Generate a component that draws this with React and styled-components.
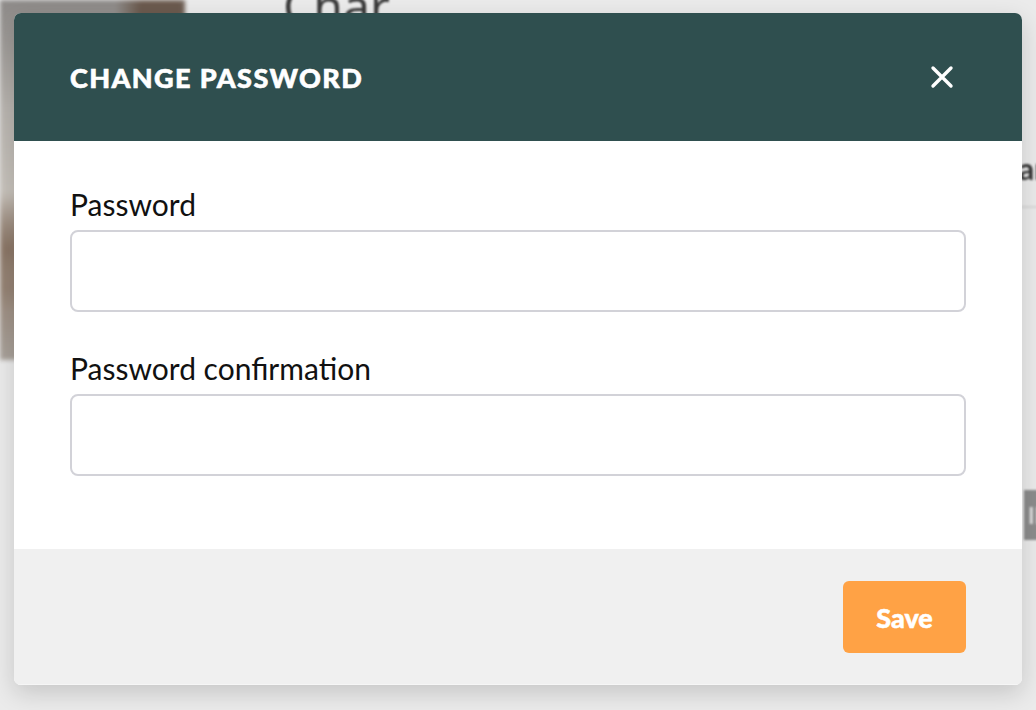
import React from 'react';
import styled, { createGlobalStyle } from 'styled-components';

const GlobalStyle = createGlobalStyle`
  html, body {
    margin: 0;
    padding: 0;
    background: #ebebeb;
    font-family: Lato, "Noto Sans", "Liberation Sans", sans-serif;
  }
  * {
    box-sizing: border-box;
  }
`;

const Page = styled.div`
  position: relative;
  width: 1036px;
  height: 710px;
  overflow: hidden;
  display: flex;
  background: #ebebeb;
`;

const Photo = styled.div`
  flex-shrink: 0;
  width: 185px;
  height: 360px;
  background:
    radial-gradient(circle at 160px 10px, #6b5a4e 0, #6b5a4e 20px, transparent 45px),
    radial-gradient(circle at 8px 250px, #8a7565 0, transparent 60px),
    linear-gradient(180deg, #8d8a88 0%, #b9b5b0 30%, #c9c4bd 55%, #9b8a7c 80%, #a9a29b 100%);
  filter: blur(2px);
`;

const Center = styled.div`
  flex-shrink: 0;
  width: 839px;
  padding-left: 98px;
`;

const PageHeading = styled.h1`
  margin: -27px 0 0;
  font-family: "Noto Sans", Lato, sans-serif;
  font-weight: 400;
  font-size: 48px;
  color: #3a3a3a;
  filter: blur(1px);
`;

const Side = styled.div`
  flex-shrink: 0;
  width: 220px;
  padding-top: 150px;
  display: flex;
  flex-direction: column;
  filter: blur(1px);
`;

const SideTitle = styled.div`
  font-size: 30px;
  font-weight: 700;
  color: #333;
  margin-left: -20px;
  padding-bottom: 20px;
  border-bottom: 2px solid #d8d8d8;
`;

const SideBand = styled.div`
  margin-top: 282px;
  height: 50px;
  background: #8c8c8c;
  color: #e0e0e0;
  font-size: 22px;
  font-weight: 700;
  padding: 12px 0 0 4px;
`;

const Overlay = styled.div`
  position: absolute;
  inset: 0;
  padding: 13px 14px;
`;

const Modal = styled.div`
  width: 1008px;
  border-radius: 7px;
  overflow: hidden;
  background: #fff;
  box-shadow: 0 8px 24px rgba(0, 0, 0, 0.16);
`;

const Header = styled.div`
  height: 128px;
  padding: 0 56px;
  display: flex;
  align-items: center;
  justify-content: space-between;
  background: #2f4f4f;
`;

const Title = styled.h2`
  margin: 0;
  color: #fff;
  font-size: 27px;
  font-weight: 900;
  letter-spacing: 1.4px;
  text-transform: uppercase;
  -webkit-text-stroke: 0.6px #fff;
`;

const CloseButton = styled.button`
  width: 48px;
  height: 48px;
  padding: 0;
  border: none;
  background: transparent;
  display: flex;
  align-items: center;
  justify-content: center;
  cursor: pointer;
`;

const Body = styled.div`
  padding: 45px 56px 35px;
  display: flex;
  flex-direction: column;
`;

const Field = styled.div`
  display: flex;
  flex-direction: column;
  margin-bottom: 38px;
`;

const Label = styled.label`
  font-size: 30px;
  line-height: 36px;
  color: #111;
  margin-bottom: 8px;
`;

const Input = styled.input`
  height: 82px;
  width: 100%;
  border: 2px solid #d2d2d8;
  border-radius: 8px;
  padding: 0 20px;
  font-size: 26px;
  font-family: inherit;
  outline: none;
`;

const Footer = styled.div`
  padding: 32px 56px 31px;
  display: flex;
  justify-content: flex-end;
  background: #f0f0f0;
  border-bottom: 1px solid #f6f6f6;
`;

const SaveButton = styled.button`
  width: 123px;
  height: 72px;
  border: none;
  border-radius: 6px;
  background: #ffa245;
  color: #fff;
  font-family: inherit;
  font-size: 27px;
  font-weight: 900;
  -webkit-text-stroke: 0.5px #fff;
  cursor: pointer;
`;

const CloseIcon = () => (
  <svg width="24" height="24" viewBox="0 0 24 24" fill="none">
    <path d="M3 3L21 21M21 3L3 21" stroke="#fff" strokeWidth="3.4" strokeLinecap="round" />
  </svg>
);

export default function App() {
  return (
    <>
      <GlobalStyle />
      <Page>
        <Photo />
        <Center>
          <PageHeading>Char</PageHeading>
        </Center>
        <Side>
          <SideTitle>llanos</SideTitle>
          <SideBand>III</SideBand>
        </Side>
        <Overlay>
          <Modal>
            <Header>
              <Title>Change password</Title>
              <CloseButton aria-label="Close">
                <CloseIcon />
              </CloseButton>
            </Header>
            <Body>
              <Field>
                <Label htmlFor="password">Password</Label>
                <Input id="password" type="password" />
              </Field>
              <Field>
                <Label htmlFor="password-confirmation">Password confirmation</Label>
                <Input id="password-confirmation" type="password" />
              </Field>
            </Body>
            <Footer>
              <SaveButton>Save</SaveButton>
            </Footer>
          </Modal>
        </Overlay>
      </Page>
    </>
  );
}
